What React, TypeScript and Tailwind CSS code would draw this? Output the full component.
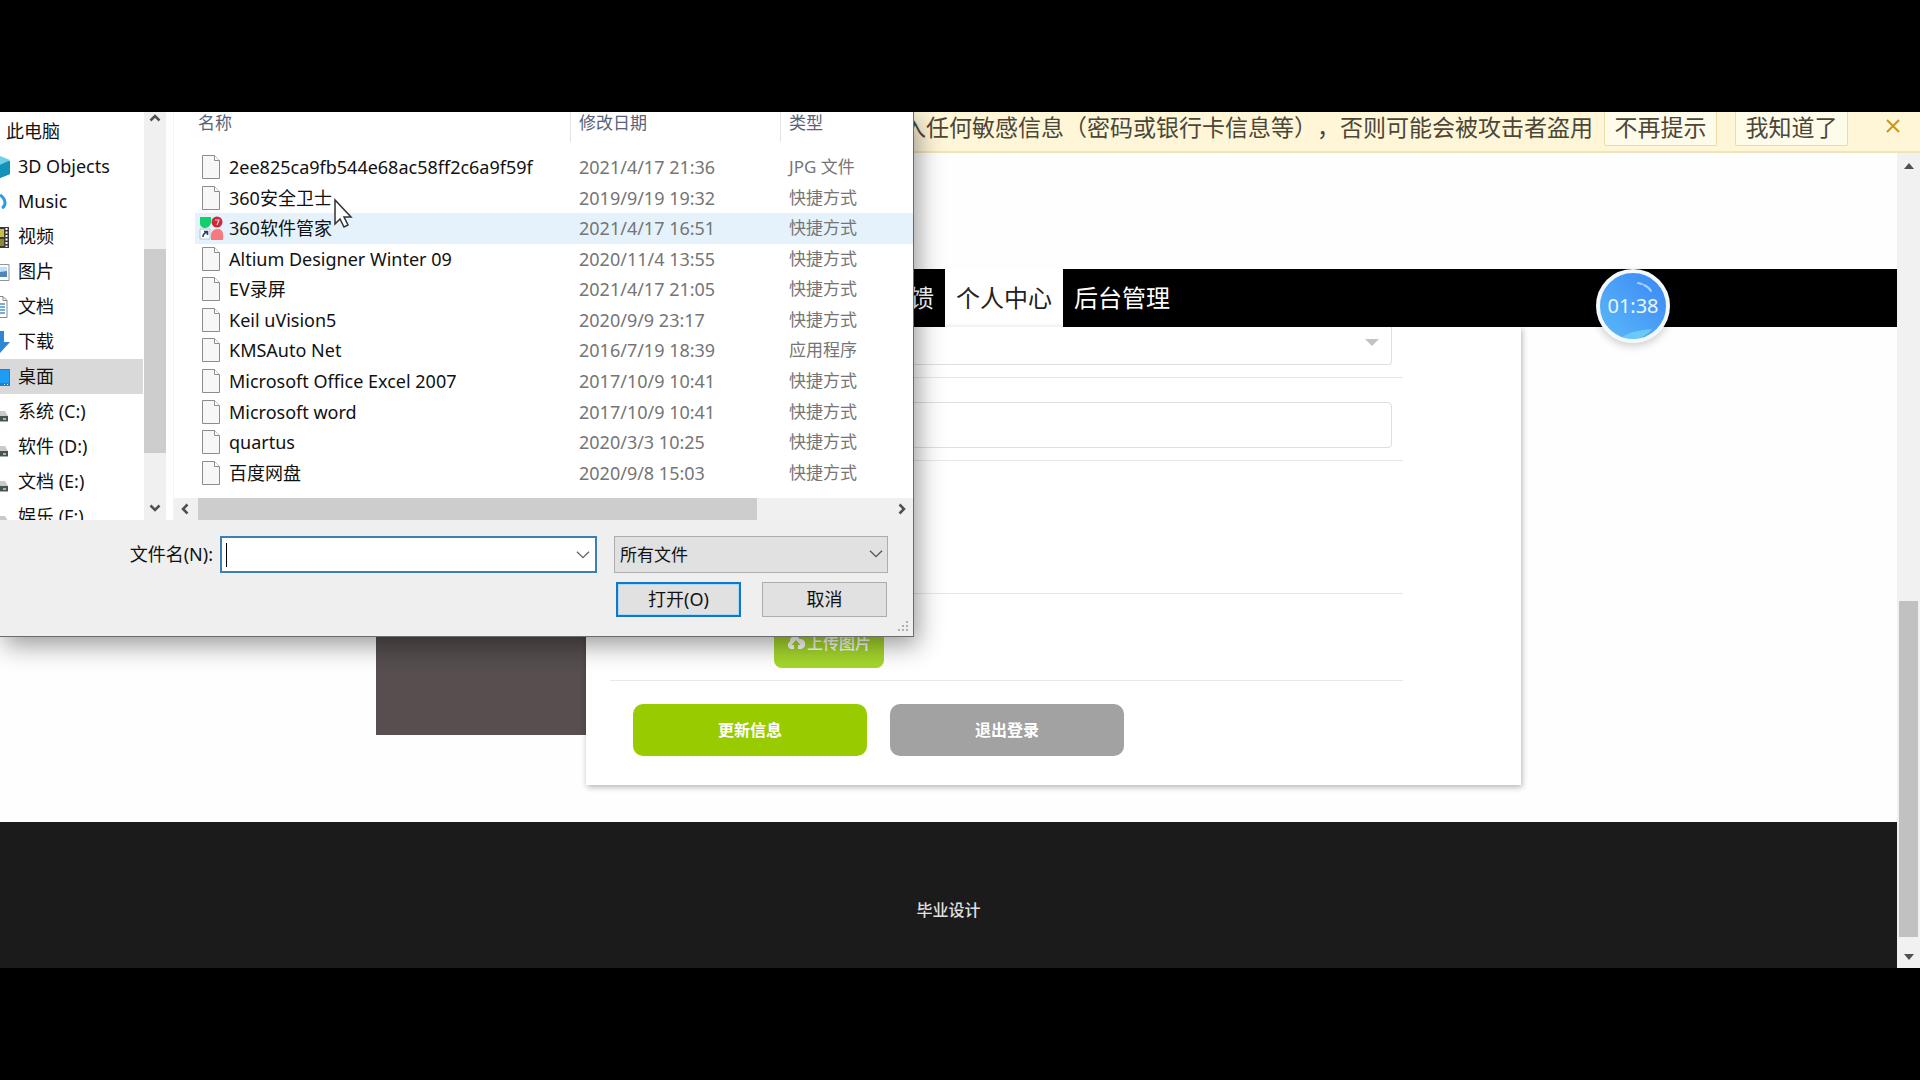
import React, { useState } from 'react';
import { clsx } from 'clsx';

interface FileEntry {
  name: string;
  date: string;
  type: string;
}

interface Place {
  label: string;
  icon: React.ReactNode;
}

const FILES: FileEntry[] = [
  { name: '2ee825ca9fb544e68ac58ff2c6a9f59f', date: '2021/4/17 21:36', type: 'JPG 文件' },
  { name: '360安全卫士', date: '2019/9/19 19:32', type: '快捷方式' },
  { name: '360软件管家', date: '2021/4/17 16:51', type: '快捷方式' },
  { name: 'Altium Designer Winter 09', date: '2020/11/4 13:55', type: '快捷方式' },
  { name: 'EV录屏', date: '2021/4/17 21:05', type: '快捷方式' },
  { name: 'Keil uVision5', date: '2020/9/9 23:17', type: '快捷方式' },
  { name: 'KMSAuto Net', date: '2016/7/19 18:39', type: '应用程序' },
  { name: 'Microsoft Office Excel 2007', date: '2017/10/9 10:41', type: '快捷方式' },
  { name: 'Microsoft word', date: '2017/10/9 10:41', type: '快捷方式' },
  { name: 'quartus', date: '2020/3/3 10:25', type: '快捷方式' },
  { name: '百度网盘', date: '2020/9/8 15:03', type: '快捷方式' },
];

// Icons of the places list, scrolled halfway out on the left
const PlaceIcon = ({ children }: { children: React.ReactNode }) => (
  <svg className="w-[10px] h-6 shrink-0" viewBox="0 0 10 24" aria-hidden="true">{children}</svg>
);

const DriveIcon = () => (
  <PlaceIcon>
    <path d="M0 11h5l3 5H0z" fill="#c9cbc9" />
    <path d="M0 16h8v6H0z" fill="#4a524e" />
    <path d="M0 21.5h8" stroke="#a9adab" />
    <path d="M3 19h3" stroke="#b7e3c4" strokeWidth="1.5" />
  </PlaceIcon>
);

const PLACES: Place[] = [
  {
    label: '3D Objects',
    icon: (
      <PlaceIcon>
        <path d="M0 2l10 4v13L0 23z" fill="#1ba4c9" />
        <path d="M0 1l10 4L0 10z" fill="#6fd0e8" />
        <path d="M0 10l10-4v13L0 23z" fill="#1493ba" />
      </PlaceIcon>
    ),
  },
  {
    label: 'Music',
    icon: (
      <PlaceIcon>
        <path d="M0 5c3 2 5 4 5 8 0 2-1 4-3 5" fill="none" stroke="#2a9be0" strokeWidth="3" />
      </PlaceIcon>
    ),
  },
  {
    label: '视频',
    icon: (
      <PlaceIcon>
        <path d="M0 2h9v21H0z" fill="#3a3a3a" />
        <path d="M0 4h4v8H0z" fill="#c9c043" />
        <path d="M0 14h4v7H0z" fill="#8d8a35" />
        <path d="M6.500 3v19" stroke="#fff" strokeWidth="2" strokeDasharray="2 1.5" />
      </PlaceIcon>
    ),
  },
  {
    label: '图片',
    icon: (
      <PlaceIcon>
        <path d="M-1 4.500h10v16H-1z" fill="#fff" stroke="#8f9599" />
        <path d="M0 7h7v5H0z" fill="#bfe0f7" />
        <path d="M0 12l7-1v6H0z" fill="#4f86b5" />
      </PlaceIcon>
    ),
  },
  {
    label: '文档',
    icon: (
      <PlaceIcon>
        <path d="M-1 1.500h4l4 4v17h-8z" fill="#fff" stroke="#83898c" />
        <path d="M3 1.500v4h4" fill="none" stroke="#83898c" />
        <path d="M0 9h5M0 12h5M0 15h5M0 18h5" stroke="#4d92c9" strokeWidth="1.5" />
      </PlaceIcon>
    ),
  },
  {
    label: '下载',
    icon: (
      <PlaceIcon>
        <path d="M0 1h4v11h6L0 23z" fill="#2f86d6" />
      </PlaceIcon>
    ),
  },
  {
    label: '桌面',
    icon: (
      <PlaceIcon>
        <path d="M0 4h10v17H0z" fill="#1583d8" />
        <path d="M0 5h9v13H0z" fill="#1f9cf5" />
        <path d="M4 19.500h1M7 19.500h1" stroke="#fff" />
      </PlaceIcon>
    ),
  },
  { label: '系统 (C:)', icon: <DriveIcon /> },
  { label: '软件 (D:)', icon: <DriveIcon /> },
  { label: '文档 (E:)', icon: <DriveIcon /> },
  { label: '娱乐 (F:)', icon: <DriveIcon /> },
];

const PageIcon = () => (
  <svg className="w-6 h-6" viewBox="0 0 24 24" aria-hidden="true">
    <path d="M3.500 .5h12l5 5v18h-17z" fill="#f7f7f7" stroke="#8c8c8c" />
    <path d="M15.500 .5v5h5" fill="#fff" stroke="#8c8c8c" />
  </svg>
);

const SoftwareIcon = () => (
  <svg className="w-6 h-6" viewBox="0 0 24 24" aria-hidden="true">
    <path d="M1 1h11v5a6 6 0 0 1-6 6H5a5 5 0 0 1-4-5z" fill="#12cf6c" />
    <circle cx="18" cy="6" r="5.5" fill="#c92b3c" />
    <path d="M16 4h4l-2 5" fill="none" stroke="#f7c9ce" strokeWidth="1.2" />
    <path d="M12 24v-5a6 6 0 0 1 6-6h1a5 5 0 0 1 5 5v6z" fill="#f9797f" />
    <path d="M1 13h10v10H1z" fill="#fff" stroke="#b5c3cf" />
    <path d="M4 21c0-3 1-4 4-5M5 15.500h3.500V19" fill="none" stroke="#23466f" strokeWidth="1.6" />
  </svg>
);

const Chevron = ({ d, className }: { d: string; className?: string }) => (
  <svg className={className} viewBox="0 0 12 12" fill="none" stroke="currentColor" aria-hidden="true">
    <path d={d} />
  </svg>
);

const UP = 'M1.500 8.500L6 4l4.500 4.500';
const DOWN = 'M1.500 3.500L6 8l4.500-4.500';
const LEFT = 'M8.500 1.500L4 6l4.500 4.500';
const RIGHT = 'M3.500 1.500L8 6l-4.500 4.500';

function FileDialog() {
  const [fileName, setFileName] = useState('');
  const [place, setPlace] = useState('桌面');
  const hovered = 2;

  return (
    <div
      role="dialog"
      aria-label="打开"
      className="absolute left-0 top-0 w-[914px] bg-[#efefef] border-r border-b border-[#6b6b6b] shadow-[4px_8px_24px_rgba(0,0,0,0.4)] text-[18px] text-[#111]"
    >
      <div className="flex h-[408px] bg-white">
        {/* Places */}
        <nav className="w-[144px] pt-[2px] overflow-hidden">
          <button className="block w-full h-[35px] pl-[6px] text-left">此电脑</button>
          {PLACES.map((p) => (
            <button
              key={p.label}
              onClick={() => setPlace(p.label)}
              className={clsx('flex items-center gap-2 w-[143px] h-[35px] text-left whitespace-nowrap', p.label === place && 'bg-[#d9d9d9]')}
            >
              {p.icon}
              {p.label}
            </button>
          ))}
        </nav>
        <div className="flex flex-col items-center w-[22px] bg-[#f0f0f0] text-[#505050]">
          <Chevron d={UP} className="w-3 h-3 stroke-[2.5px]" />
          <div className="w-full h-[204px] mt-[125px] mb-auto bg-[#cdcdcd]" />
          <Chevron d={DOWN} className="w-3 h-3 stroke-[2.5px] mb-[6px]" />
        </div>
        <div className="w-2 border-r border-[#f4f4f4] bg-white" />

        {/* Files */}
        <div className="flex flex-col flex-1 justify-between">
          <div className="flex h-10 text-[17px] leading-[22px] text-[#56637a]">
            <div className="w-[396px] pl-6">名称</div>
            <div className="w-[210px] h-[30px] pl-[8px] border-l border-[#e3e3e3]">修改日期</div>
            <div className="flex-1 h-[30px] pl-[8px] border-l border-[#e3e3e3]">类型</div>
          </div>
          <table className="w-full h-[336px] mb-auto table-fixed text-left">
            <tbody>
              {FILES.map((f, i) => (
                <tr key={f.name} className="leading-6">
                  <td className="w-[21px] p-0" />
                  <td className={clsx('w-[375px] p-0', i === hovered && 'bg-[#e5f2fc]')}>
                    <div className="flex items-center gap-[6px] pl-1">
                      {i === hovered ? <SoftwareIcon /> : <PageIcon />}
                      {f.name}
                    </div>
                  </td>
                  <td className={clsx('w-[210px] p-0 pl-[9px] text-[#757575]', i === hovered && 'bg-[#e5f2fc]')}>{f.date}</td>
                  <td className={clsx('p-0 pl-[9px] text-[17px] text-[#757575]', i === hovered && 'bg-[#e5f2fc]')}>{f.type}</td>
                </tr>
              ))}
            </tbody>
          </table>
          <div className="flex items-center justify-between h-[22px] px-[5px] bg-[#f0f0f0] text-[#505050]">
            <Chevron d={LEFT} className="w-3 h-3 stroke-[2.5px]" />
            <div className="w-[559px] h-full mr-auto ml-[7px] bg-[#cdcdcd]" />
            <Chevron d={RIGHT} className="w-3 h-3 stroke-[2.5px]" />
          </div>
        </div>
      </div>

      {/* Name and buttons */}
      <div className="pt-4 pb-[19px] pr-[25px]">
        <div className="flex items-center justify-end">
          <label htmlFor="file-name" className="mr-[7px]">文件名(N):</label>
          <div className="flex items-center w-[377px] h-[37px] px-1 mr-[17px] bg-white border-2 border-[#3c7fb8]">
            <span className="w-px h-6 bg-black" />
            <input
              id="file-name"
              value={fileName}
              onChange={(e) => setFileName(e.target.value)}
              className="flex-1 outline-none"
            />
            <button aria-label="历史记录" className="text-[#666]">
              <Chevron d={DOWN} className="w-4 h-4" />
            </button>
          </div>
          <div className="relative w-[274px]">
            <select aria-label="文件类型" className="appearance-none w-full h-[37px] pl-[5px] bg-[#e1e1e1] border border-[#adadad] text-[17px]">
              <option>所有文件</option>
            </select>
            <Chevron d={DOWN} className="absolute right-1 top-[10px] w-4 h-4 text-[#555]" />
          </div>
        </div>
        <div className="flex justify-end gap-[21px] mt-[9px] pr-px">
          <button className="w-[125px] h-[35px] bg-[#e1e1e1] border-2 border-[#1874c8] shadow-[inset_0_0_0_1px_#a9dcfb]">打开(O)</button>
          <button className="w-[125px] h-[35px] bg-[#e1e1e1] border border-[#adadad]">取消</button>
        </div>
      </div>
      <svg className="absolute right-1 bottom-[3px] w-3 h-3" viewBox="0 0 12 12" fill="#b0b0b0" aria-hidden="true">
        <path d="M9 0h2v2H9zM5 4h2v2H5zM9 4h2v2H9zM1 8h2v2H1zM5 8h2v2H5zM9 8h2v2H9z" />
      </svg>
    </div>
  );
}

function App() {
  return (
    <div className="min-h-screen py-28 bg-black font-['Noto_Sans','Noto_Sans_CJK_SC',sans-serif]">
      <div className="relative overflow-hidden bg-[#fefefe]">
        {/* Browser warning */}
        <div className="flex items-start justify-end h-[41px] pr-5 bg-[#fff6d8] border-b-2 border-[#f1e4b8] text-[23px] leading-[30px] text-[#4b4738] whitespace-nowrap">
          <span className="mr-[11px] [text-spacing-trim:space-all]">入任何敏感信息（密码或银行卡信息等），否则可能会被攻击者盗用</span>
          <button className="w-[113px] h-[34px] mr-[18px] pb-1 bg-[#fffbea] border border-t-0 border-[#ecdca0] rounded-b-xs">不再提示</button>
          <button className="w-[113px] h-[34px] mr-[38px] pb-1 bg-[#fffbea] border border-t-0 border-[#ecdca0] rounded-b-xs">我知道了</button>
          <button aria-label="关闭" className="pt-[7px] text-[#c9971f]">
            <svg className="w-[14px] h-[14px]" viewBox="0 0 14 14" fill="none" stroke="currentColor" strokeWidth="2">
              <path d="M1 1l12 12M13 1L1 13" />
            </svg>
          </button>
        </div>

        <div className="flex">
          <div className="flex-1 pt-[116px]">
            <nav className="bg-black">
              <ul className="flex max-w-[1145px] mx-auto pl-[499px] text-[24px] leading-[58px] text-white">
                <li><a href="#feedback" className="block px-[11px]">反馈</a></li>
                <li><a href="#me" className="block px-[11px] bg-white text-[#222]">个人中心</a></li>
                <li><a href="#admin" className="block px-[11px]">后台管理</a></li>
              </ul>
            </nav>

            <div className="flex items-start max-w-[1145px] mx-auto mb-[37px]">
              <div className="w-[210px] h-[408px] bg-[#564e4f]" />
              <form className="flex-1 pl-6 pr-[118px] bg-white shadow-[1px_2px_6px_rgba(0,0,0,0.3)]">
                <div className="relative pl-[164px] pr-[11px] pb-3 border-b border-[#e8e8e8]">
                  <select aria-label="性别" className="block appearance-none w-full h-[38px] border border-t-0 border-[#dcdfe3] rounded-b-[4px]" />
                  <svg className="absolute right-6 top-3 w-[14px] h-[7px]" viewBox="0 0 14 7" fill="#c2c2c2" aria-hidden="true">
                    <path d="M0 0h14L7 7z" />
                  </svg>
                </div>
                <div className="pl-[164px] pr-[11px] pt-6 pb-3 border-b border-[#e8e8e8]">
                  <input aria-label="邮箱" className="block w-full h-[46px] px-3 border border-[#dcdfe3] rounded-[4px]" />
                </div>
                <div className="h-[133px] border-b border-[#e8e8e8]" />
                <div className="pl-[164px] pt-7 pb-3 border-b border-[#e8e8e8]">
                  <button type="button" className="flex items-center justify-center gap-[2px] w-[110px] h-[46px] pb-1 bg-[#a5d62b] rounded-[8px] text-[16px] font-medium text-white">
                    <svg className="w-[18px] h-4" viewBox="0 0 18 16" fill="currentColor" aria-hidden="true">
                      <path d="M4 14a4 4 0 0 1-1-7.500A5 5 0 0 1 12.500 4 4 4 0 0 1 14 14h-3v-4h2.500L9 5 4.500 10H7v4z" />
                    </svg>
                    上传图片
                  </button>
                </div>
                <div className="flex gap-[23px] pl-[23px] pt-[23px] pb-[29px] text-[16px] font-bold text-white">
                  <button type="button" className="w-[234px] h-[52px] bg-[#99cc00] rounded-[10px]">更新信息</button>
                  <button type="button" className="w-[234px] h-[52px] bg-[#a2a2a2] rounded-[10px]">退出登录</button>
                </div>
              </form>
            </div>

            <footer className="pt-[76px] pb-[46px] bg-[#1b1b1b] text-center text-[16px] leading-6 font-medium text-[#e0e0e0]">
              毕业设计
            </footer>
          </div>

          {/* Page scrollbar */}
          <div className="flex flex-col items-center w-[23px] pt-[10px] pb-2 bg-[#f1f1f1]">
            <svg className="w-[10px] h-[6px]" viewBox="0 0 10 6" fill="#505050" aria-hidden="true">
              <path d="M5 0l5 6H0z" />
            </svg>
            <div className="w-[19px] h-[336px] mt-auto mb-[17px] bg-[#c1c1c1]" />
            <svg className="w-[10px] h-[6px]" viewBox="0 0 10 6" fill="#505050" aria-hidden="true">
              <path d="M0 0h10L5 6z" />
            </svg>
          </div>
        </div>

        <FileDialog />

        {/* Recorder bubble */}
        <div className="absolute left-[1596px] top-[157px] flex items-center justify-center w-[74px] h-[74px] rounded-full border-4 border-[#f3f8fd] bg-gradient-to-tr from-[#5cb9f8] to-[#3c86f6] shadow-[0_3px_8px_rgba(0,0,0,0.2)] overflow-hidden text-[20px] text-[#eaf6ff]">
          <svg className="absolute inset-0 w-full h-full" viewBox="0 0 66 66" fill="none" aria-hidden="true">
            <path d="M22 64c8-5 17-7 30-8-4 6-12 10-19 10-4 0-8-1-11-2z" fill="#6cc9f6" />
            <path d="M38 10l4 1M44 12c3 1 5 3 7 6" stroke="#a9d3ff" strokeWidth="2" strokeLinecap="round" />
          </svg>
          <span className="relative">01:38</span>
        </div>

        {/* Mouse pointer */}
        <svg className="absolute left-[333px] top-[86px] w-5 h-8" viewBox="0 0 20 32" aria-hidden="true">
          <path d="M2 2v24l5-5 4 8 4-2-4-8h7z" fill="#fff" stroke="#333" strokeWidth="1.5" />
        </svg>
      </div>
    </div>
  );
}

export default App;
